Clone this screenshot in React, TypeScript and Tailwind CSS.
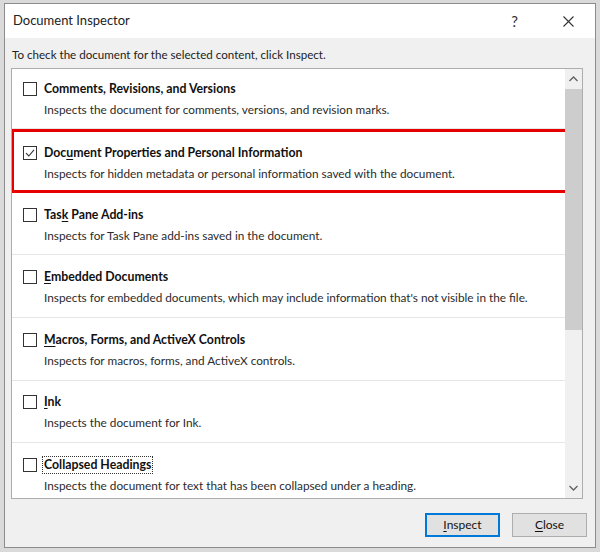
import React from 'react'

type Item = {
  pre: string
  key: string
  post: string
  desc: string
  h: string
  pt: string
  checked?: boolean
  focused?: boolean
  highlight?: boolean
}

const ITEMS: Item[] = [
  { pre: 'Comments, Revisions, and Versions', key: '', post: '', desc: 'Inspects the document for comments, versions, and revision marks.', h: 'h-[60px]', pt: 'pt-[12px]' },
  { pre: 'Doc', key: 'u', post: 'ment Properties and Personal Information', desc: 'Inspects for hidden metadata or personal information saved with the document.', h: 'h-[64px]', pt: 'pt-[16px]', checked: true, highlight: true },
  { pre: 'Tas', key: 'k', post: ' Pane Add-ins', desc: 'Inspects for Task Pane add-ins saved in the document.', h: 'h-[62px]', pt: 'pt-[14px]' },
  { pre: '', key: 'E', post: 'mbedded Documents', desc: "Inspects for embedded documents, which may include information that's not visible in the file.", h: 'h-[63px]', pt: 'pt-[14px]' },
  { pre: '', key: 'M', post: 'acros, Forms, and ActiveX Controls', desc: 'Inspects for macros, forms, and ActiveX controls.', h: 'h-[63px]', pt: 'pt-[14px]' },
  { pre: '', key: 'I', post: 'nk', desc: 'Inspects the document for Ink.', h: 'h-[62px]', pt: 'pt-[13px]' },
  { pre: 'Collapsed Headings', key: '', post: '', desc: 'Inspects the document for text that has been collapsed under a heading.', h: 'h-[56px]', pt: 'pt-[14px]', focused: true },
]

function CheckBox({ checked }: { checked?: boolean }) {
  return (
    <div className="w-[14px] h-[14px] border border-[#333] bg-white flex items-center justify-center shrink-0">
      {checked && (
        <svg width="10" height="10" viewBox="0 0 10 10">
          <path d="M1 5.2 L3.8 8 L9 1.8" fill="none" stroke="#333" strokeWidth="1.1" />
        </svg>
      )}
    </div>
  )
}

function Row({ item, last }: { item: Item; last: boolean }) {
  return (
    <div
      className={`${item.h} ${last ? '' : 'border-b border-[#e6e6e6]'} ${
        item.highlight ? 'outline-3 outline-[#e60000] -outline-offset-3 relative -ml-px w-[558px]' : ''
      }`}
    >
      <div className={`flex items-center gap-[7px] ${item.highlight ? 'pl-[12px]' : 'pl-[11px]'} ${item.pt}`}>
        <CheckBox checked={item.checked} />
        <span
          className={`font-bold text-[12.3px] leading-[16px] text-[#111] whitespace-nowrap ${
            item.focused ? 'outline outline-1 outline-dotted outline-[#333] px-px -ml-px' : ''
          }`}
        >
          {item.pre}
          {item.key && <span className="underline underline-offset-2">{item.key}</span>}
          {item.post}
        </span>
      </div>
      <div className={`text-[11.8px] leading-[16px] text-[#2b2b2b] mt-[5px] whitespace-nowrap ${item.highlight ? 'pl-[33px]' : 'pl-[32px]'}`}>
        {item.desc}
      </div>
    </div>
  )
}

export default function App() {
  return (
    <div
      className="w-[600px] h-[552px] bg-[#dadada] pt-[3px] pl-[4px]"
      style={{ fontFamily: 'Lato, "Noto Sans", sans-serif' }}
    >
      <div className="w-[592px] h-[545px] border border-[#8c8c8c] bg-[#f0f0f0] flex flex-col">
        {/* title bar */}
        <div className="h-[34px] bg-white flex items-center pl-[8px] shrink-0">
          <span className="text-[13px] text-[#222]">Document Inspector</span>
          <span className="ml-auto text-[15px] text-[#333] mr-[45px]">?</span>
          <svg width="11" height="11" viewBox="0 0 11 11" className="mr-[21px]">
            <path d="M0.5 0.5 L10.5 10.5 M10.5 0.5 L0.5 10.5" stroke="#333" strokeWidth="1.1" />
          </svg>
        </div>

        <div className="px-[7px] pt-[9px] text-[11.6px] leading-[16px] text-[#222]">
          To check the document for the selected content, click Inspect.
        </div>

        {/* list box */}
        <div className="ml-[6px] mt-[5px] w-[572px] h-[431px] border border-[#adadad] bg-white flex">
          <div className="flex-1 overflow-hidden">
            {ITEMS.map((it, i) => (
              <Row key={i} item={it} last={i === ITEMS.length - 1} />
            ))}
          </div>
          <div className="w-[17px] bg-[#f0f0f0] flex flex-col items-center">
            <div className="h-[20px] flex items-center justify-center">
              <svg width="9" height="6" viewBox="0 0 9 6">
                <path d="M0.5 5 L4.5 1 L8.5 5" fill="none" stroke="#606060" strokeWidth="1.3" />
              </svg>
            </div>
            <div className="w-[17px] h-[241px] bg-[#cdcdcd]" />
            <div className="flex-1" />
            <div className="h-[20px] flex items-center justify-center">
              <svg width="9" height="6" viewBox="0 0 9 6">
                <path d="M0.5 1 L4.5 5 L8.5 1" fill="none" stroke="#606060" strokeWidth="1.3" />
              </svg>
            </div>
          </div>
        </div>

        {/* buttons */}
        <div className="flex justify-end gap-[12px] pr-[8px] mt-[14px]">
          <button className="w-[75px] h-[24px] bg-[#e1e1e1] border border-[#0078d7] outline outline-1 outline-[#0078d7] -outline-offset-2 text-[12px] text-[#111]">
            <span className="underline underline-offset-2">I</span>nspect
          </button>
          <button className="w-[75px] h-[24px] bg-[#e1e1e1] border border-[#adadad] text-[12px] text-[#111]">
            <span className="underline underline-offset-2">C</span>lose
          </button>
        </div>
      </div>
    </div>
  )
}
